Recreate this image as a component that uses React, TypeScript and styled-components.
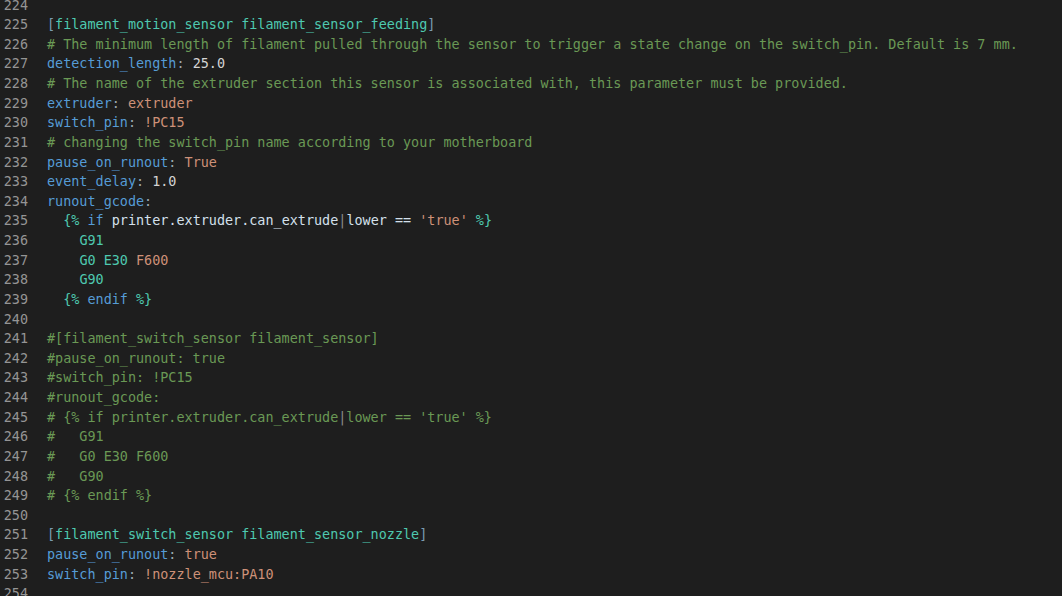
import React from "react";
import styled, { createGlobalStyle } from "styled-components";

const Global = createGlobalStyle`
  html, body {
    margin: 0;
    padding: 0;
    background: #1e1e1e;
    overflow: hidden;
  }
`;

type Kind =
  | "plain"
  | "bracket"
  | "section"
  | "comment"
  | "key"
  | "punc"
  | "num"
  | "str"
  | "tag"
  | "kw"
  | "var"
  | "pipe"
  | "gc";

const colors: Record<Kind, string> = {
  plain: "#d4d4d4",
  bracket: "#7a9cb0",
  section: "#4ec9b0",
  comment: "#6a9955",
  key: "#569cd6",
  punc: "#9aa7b0",
  num: "#d4d4d4",
  str: "#ce9178",
  tag: "#4ec9b0",
  kw: "#569cd6",
  var: "#d4e0ec",
  pipe: "#8a8a8a",
  gc: "#4ec9b0",
};

const Editor = styled.div`
  width: 1062px;
  height: 596px;
  overflow: hidden;
  background: #1e1e1e;
  font-family: "DejaVu Sans Mono", "Liberation Mono", monospace;
  font-size: 13.45px;
`;

const Lines = styled.div`
  margin-top: -4.5px;
  display: flex;
  flex-direction: column;
`;

const Row = styled.div`
  display: grid;
  grid-template-columns: 28px 1fr;
  column-gap: 19px;
  height: 19.64px;
  line-height: 19.64px;
  white-space: pre;
`;

const LineNo = styled.span`
  color: #959595;
  text-align: right;
`;

const Code = styled.span`
  color: #d4d4d4;
`;

const Tok = styled.span<{ $kind: Kind }>`
  color: ${(p) => colors[p.$kind]};
`;

type T = [Kind, string];

const key = (k: string, v?: T, colon = ": "): T[] =>
  v ? [["key", k], ["punc", colon], v] : [["key", k], ["punc", colon]];

const lines: T[][] = [
  [],
  [["bracket", "["], ["section", "filament_motion_sensor filament_sensor_feeding"], ["bracket", "]"]],
  [["comment", "# The minimum length of filament pulled through the sensor to trigger a state change on the switch_pin. Default is 7 mm."]],
  key("detection_length", ["num", "25.0"]),
  [["comment", "# The name of the extruder section this sensor is associated with, this parameter must be provided."]],
  key("extruder", ["str", "extruder"]),
  key("switch_pin", ["str", "!PC15"]),
  [["comment", "# changing the switch_pin name according to your motherboard"]],
  key("pause_on_runout", ["str", "True"]),
  key("event_delay", ["num", "1.0"]),
  key("runout_gcode", undefined, ":"),
  [
    ["plain", "  "],
    ["tag", "{%"],
    ["plain", " "],
    ["kw", "if"],
    ["plain", " "],
    ["var", "printer.extruder.can_extrude"],
    ["pipe", "|"],
    ["var", "lower"],
    ["plain", " "],
    ["var", "=="],
    ["plain", " "],
    ["str", "'true'"],
    ["plain", " "],
    ["tag", "%}"],
  ],
  [["plain", "    "], ["gc", "G91"]],
  [["plain", "    "], ["gc", "G0"], ["plain", " "], ["gc", "E30"], ["plain", " "], ["str", "F600"]],
  [["plain", "    "], ["gc", "G90"]],
  [["plain", "  "], ["tag", "{%"], ["plain", " "], ["kw", "endif"], ["plain", " "], ["tag", "%}"]],
  [],
  [["comment", "#[filament_switch_sensor filament_sensor]"]],
  [["comment", "#pause_on_runout: true"]],
  [["comment", "#switch_pin: !PC15"]],
  [["comment", "#runout_gcode:"]],
  [["comment", "# {% if printer.extruder.can_extrude"], ["pipe", "|"], ["comment", "lower == 'true' %}"]],
  [["comment", "#   G91"]],
  [["comment", "#   G0 E30 F600"]],
  [["comment", "#   G90"]],
  [["comment", "# {% endif %}"]],
  [],
  [["bracket", "["], ["section", "filament_switch_sensor filament_sensor_nozzle"], ["bracket", "]"]],
  key("pause_on_runout", ["str", "true"]),
  key("switch_pin", ["str", "!nozzle_mcu:PA10"]),
  [],
];

export default function App() {
  return (
    <>
      <Global />
      <Editor>
        <Lines>
          {lines.map((toks, i) => (
            <Row key={i}>
              <LineNo>{224 + i}</LineNo>
              <Code>
                {toks.map(([k, t], j) => (
                  <Tok key={j} $kind={k}>
                    {t}
                  </Tok>
                ))}
              </Code>
            </Row>
          ))}
        </Lines>
      </Editor>
    </>
  );
}
